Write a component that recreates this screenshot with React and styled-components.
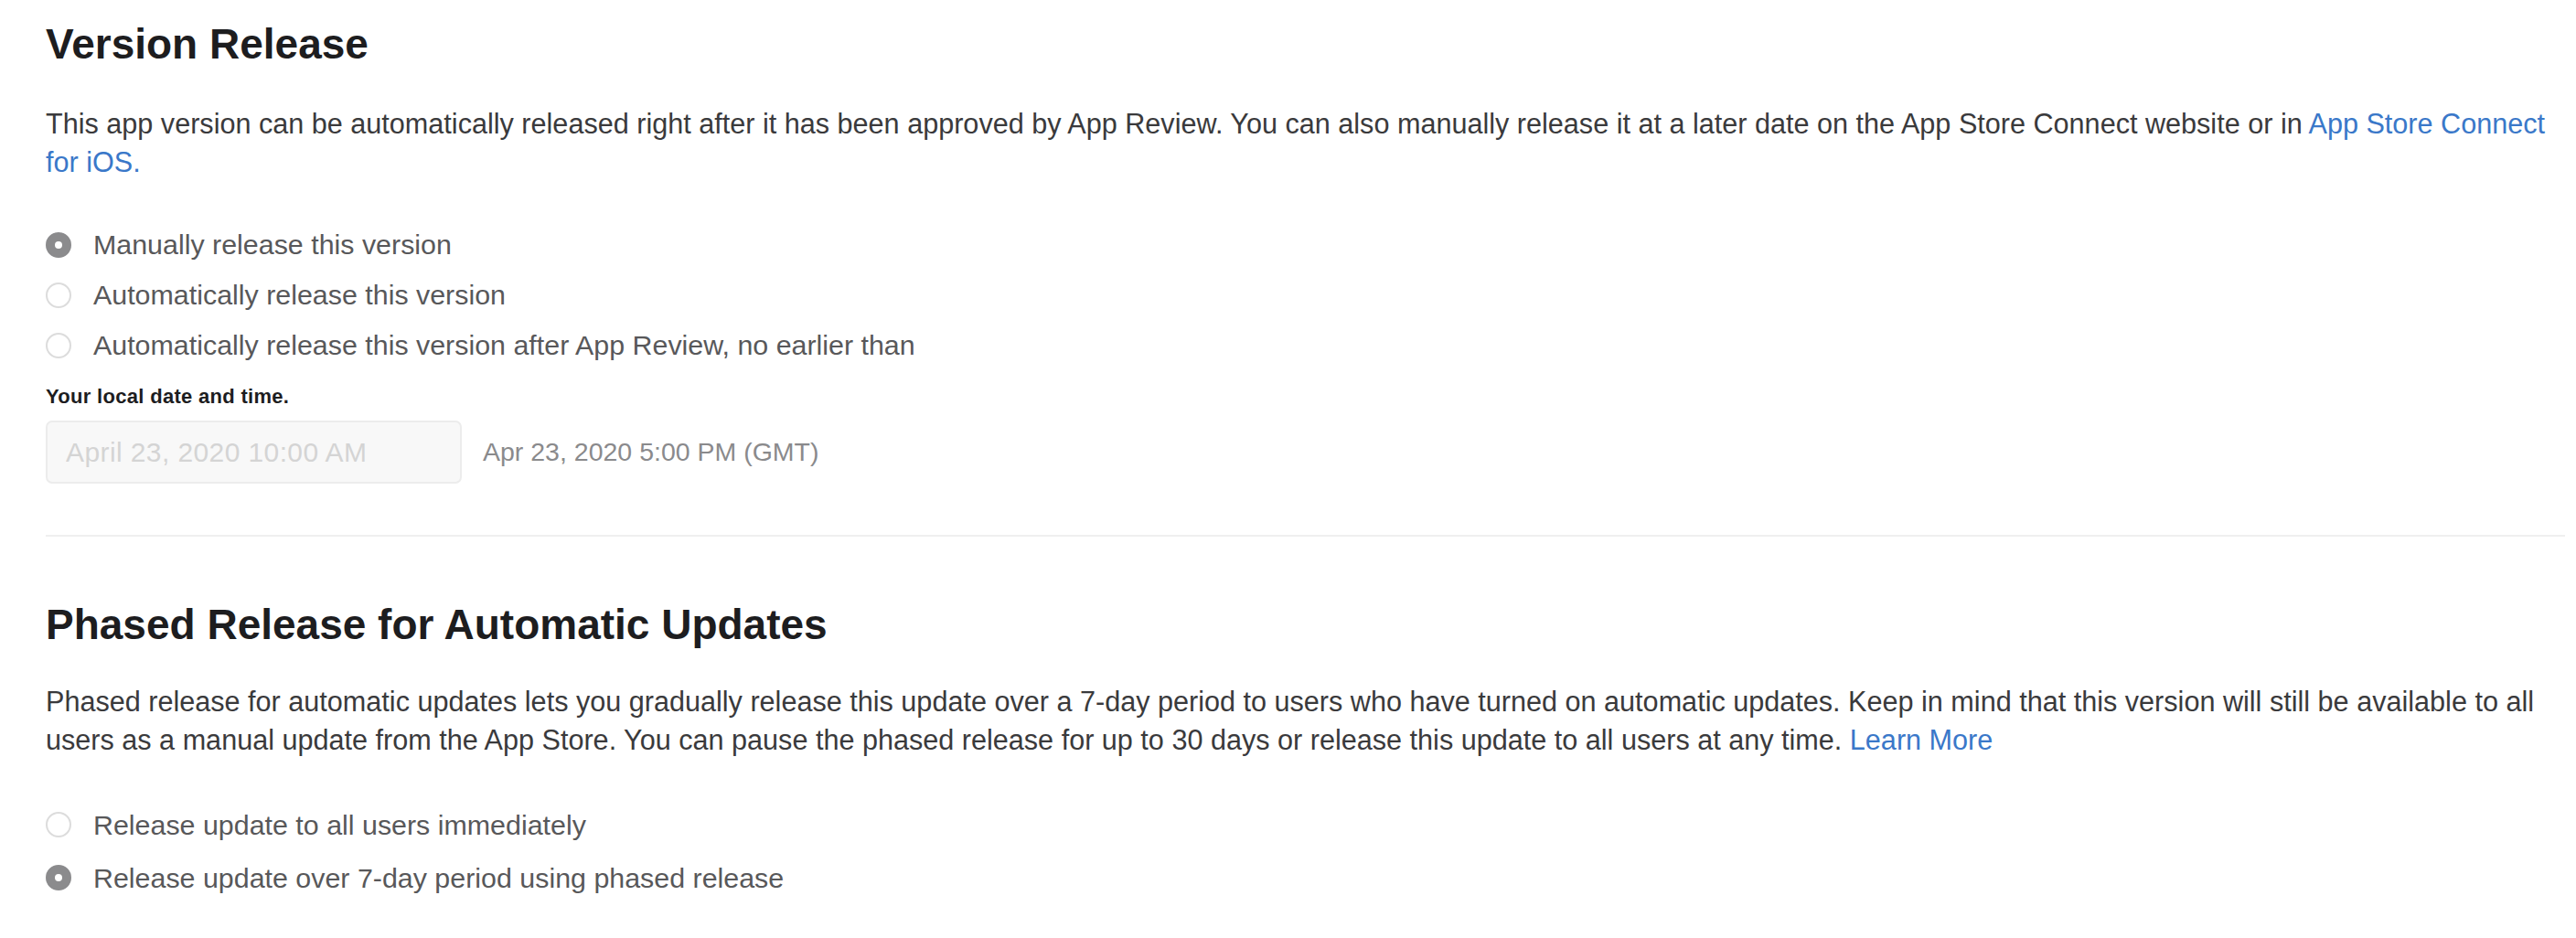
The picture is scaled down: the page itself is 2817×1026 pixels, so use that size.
import React from 'react';
import styled, { createGlobalStyle } from 'styled-components';

const GlobalStyle = createGlobalStyle`
  body {
    margin: 0;
    background: #fff;
    font-family: "Liberation Sans", Arial, sans-serif;
  }
`;

const Page = styled.main`
  padding: 0 12px 40px 50px;
`;

const Section = styled.section`
  display: flex;
  flex-direction: column;
  padding-top: ${(p) => p.$top}px;
`;

const Title = styled.h2`
  margin: 0;
  font-size: 46px;
  line-height: 52px;
  font-weight: 700;
  color: #1d1d1f;
`;

const Text = styled.p`
  margin: ${(p) => p.$top}px 0 0;
  padding-right: 10px;
  font-size: 30.6px;
  line-height: 42px;
  color: #3a3a3c;
`;

const Link = styled.a`
  color: #3a78c9;
  text-decoration: none;
`;

const RadioGroup = styled.div`
  display: flex;
  flex-direction: column;
  margin-top: ${(p) => p.$top}px;
`;

const RadioRow = styled.label`
  display: flex;
  align-items: center;
  gap: 24px;
  height: ${(p) => p.$height}px;
`;

const Radio = styled.span`
  box-sizing: border-box;
  width: 28px;
  height: 28px;
  border-radius: 50%;
  flex-shrink: 0;
  display: flex;
  align-items: center;
  justify-content: center;
  background: ${(p) => (p.$checked ? '#8b8b8d' : '#fff')};
  border: 2px solid ${(p) => (p.$checked ? '#8b8b8d' : '#dcdcdc')};

  &::after {
    content: '';
    display: ${(p) => (p.$checked ? 'block' : 'none')};
    width: 8px;
    height: 8px;
    border-radius: 50%;
    background: #fff;
  }
`;

const Label = styled.span`
  font-size: 30.4px;
  color: #58585a;
`;

const FieldLabel = styled.div`
  margin-top: 16px;
  font-size: 22px;
  line-height: 26px;
  font-weight: 700;
  letter-spacing: 0.3px;
  color: #1d1d1f;
`;

const DateRow = styled.div`
  display: flex;
  align-items: center;
  gap: 23px;
  margin-top: 13px;
`;

const DateInput = styled.input`
  box-sizing: border-box;
  width: 455px;
  height: 69px;
  padding: 0 20px;
  border: 2px solid #ececec;
  border-radius: 7px;
  background: #f8f8f8;
  font-family: inherit;
  font-size: 30px;
  letter-spacing: 0.4px;

  &::placeholder {
    color: #d4d4d4;
  }
`;

const Zone = styled.span`
  font-size: 28.5px;
  color: #8a8a8c;
`;

const Divider = styled.hr`
  margin: 56px 0 0;
  border: 0;
  height: 2px;
  background: #efefef;
`;

const versionOptions = [
  { label: 'Manually release this version', checked: true },
  { label: 'Automatically release this version' },
  { label: 'Automatically release this version after App Review, no earlier than' },
];

const phasedOptions = [
  { label: 'Release update to all users immediately' },
  { label: 'Release update over 7-day period using phased release', checked: true },
];

const Options = ({ items, top, height }) => (
  <RadioGroup $top={top}>
    {items.map((o) => (
      <RadioRow key={o.label} $height={height}>
        <Radio $checked={o.checked} />
        <Label>{o.label}</Label>
      </RadioRow>
    ))}
  </RadioGroup>
);

export default function App() {
  return (
    <Page>
      <GlobalStyle />
      <Section $top={22}>
        <Title>Version Release</Title>
        <Text $top={40}>
          This app version can be automatically released right after it has been approved by App
          Review. You can also manually release it at a later date on the App Store Connect website
          or in <Link href="#">App Store Connect for iOS.</Link>
        </Text>
        <Options items={versionOptions} top={42} height={55} />
        <FieldLabel>Your local date and time.</FieldLabel>
        <DateRow>
          <DateInput placeholder="April 23, 2020 10:00 AM" disabled />
          <Zone>Apr 23, 2020 5:00 PM (GMT)</Zone>
        </DateRow>
      </Section>
      <Divider />
      <Section $top={70}>
        <Title>Phased Release for Automatic Updates</Title>
        <Text $top={37}>
          Phased release for automatic updates lets you gradually release this update over a 7-day
          period to users who have turned on automatic updates. Keep in mind that this version will
          still be available to all users as a manual update from the App Store. You can pause the
          phased release for up to 30 days or release this update to all users at any time.{' '}
          <Link href="#">Learn More</Link>
        </Text>
        <Options items={phasedOptions} top={43} height={58} />
      </Section>
    </Page>
  );
}
